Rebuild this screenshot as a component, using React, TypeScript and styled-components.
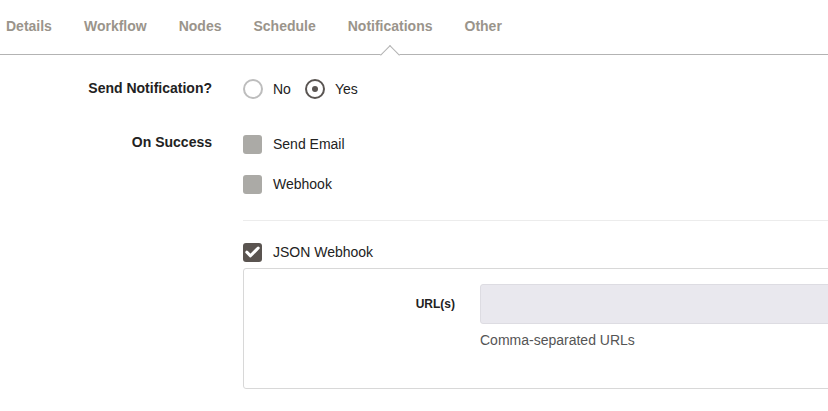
import React from "react";
import styled, { createGlobalStyle } from "styled-components";

const Global = createGlobalStyle`
  html, body { margin: 0; padding: 0; background: #fff; overflow: hidden; }
  body { font-family: "Liberation Sans", Arial, sans-serif; color: #222; }
`;

const Page = styled.div`
  width: 900px;
`;

const TabBar = styled.nav`
  display: flex;
  gap: 32px;
  padding: 18px 0 0 6px;
  box-sizing: border-box;
  border-bottom: 1px solid #b3b3b3;
  height: 55px;
`;

const Tab = styled.div<{ $active?: boolean }>`
  position: relative;
  font-size: 14px;
  font-weight: bold;
  line-height: 16px;
  color: #9a948b;
  height: 36px;
  &::after {
    content: "";
    display: ${(p) => (p.$active ? "block" : "none")};
    position: absolute;
    left: 50%;
    bottom: -8px;
    width: 14px;
    height: 14px;
    margin-left: -7px;
    background: #fff;
    border-left: 1px solid #b3b3b3;
    border-top: 1px solid #b3b3b3;
    transform: rotate(45deg);
    box-sizing: border-box;
  }
`;

const Form = styled.div`
  display: grid;
  grid-template-columns: 212px 1fr;
  column-gap: 31px;
  row-gap: 34px;
  padding-top: 23px;
`;

const Label = styled.div<{ $pt?: number }>`
  text-align: right;
  font-size: 14px;
  font-weight: bold;
  line-height: 16px;
  color: #222;
  padding-top: ${(p) => p.$pt ?? 0}px;
`;

const RadioGroup = styled.div`
  display: flex;
  align-items: center;
  gap: 14px;
  height: 22px;
`;

const RadioOption = styled.label`
  display: flex;
  align-items: center;
  gap: 10px;
  font-size: 14px;
  color: #222;
`;

const RadioCircle = styled.span<{ $checked?: boolean }>`
  width: 20px;
  height: 20px;
  box-sizing: border-box;
  border-radius: 50%;
  border: 2px solid ${(p) => (p.$checked ? "#5a5552" : "#bdbdbd")};
  display: flex;
  align-items: center;
  justify-content: center;
  &::after {
    content: "";
    display: ${(p) => (p.$checked ? "block" : "none")};
    width: 6px;
    height: 6px;
    border-radius: 50%;
    background: #5a5552;
  }
`;

const Controls = styled.div`
  display: flex;
  flex-direction: column;
`;

const CheckRow = styled.label<{ $mt?: number }>`
  display: flex;
  align-items: center;
  gap: 11px;
  height: 20px;
  margin-top: ${(p) => p.$mt ?? 0}px;
  font-size: 14px;
  color: #222;
`;

const Box = styled.span<{ $checked?: boolean }>`
  width: 19px;
  height: 19px;
  border-radius: 3px;
  background: ${(p) => (p.$checked ? "#5a5450" : "#abaaa6")};
  display: flex;
  align-items: center;
  justify-content: center;
`;

const Divider = styled.hr`
  margin: 26px 0 0;
  border: 0;
  border-top: 1px solid #ececec;
  height: 0;
`;

const Panel = styled.div`
  margin-top: 6px;
  border: 1px solid #d8d8d8;
  border-radius: 3px;
  padding: 15px 0 39px;
  display: grid;
  grid-template-columns: 211px 1fr;
  column-gap: 25px;
  row-gap: 7px;
`;

const FieldLabel = styled.div`
  text-align: right;
  font-size: 12px;
  font-weight: bold;
  color: #222;
  align-self: center;
`;

const Input = styled.input`
  height: 40px;
  box-sizing: border-box;
  border: 1px solid #dddce2;
  border-radius: 3px;
  background: #e9e8ee;
  outline: none;
`;

const Help = styled.div`
  grid-column: 2;
  font-size: 14px;
  line-height: 18px;
  color: #555;
`;

const Check = () => (
  <svg width="15" height="12" viewBox="0 0 15 12">
    <polyline points="1.8,6.2 5.5,9.8 13.2,2" fill="none" stroke="#fff" strokeWidth="3" strokeLinecap="round" strokeLinejoin="round" />
  </svg>
);

export default function App() {
  const tabs = ["Details", "Workflow", "Nodes", "Schedule", "Notifications", "Other"];
  return (
    <Page>
      <Global />
      <TabBar>
        {tabs.map((t) => (
          <Tab key={t} $active={t === "Notifications"}>{t}</Tab>
        ))}
      </TabBar>
      <Form>
        <Label $pt={2}>Send Notification?</Label>
        <RadioGroup>
          <RadioOption><RadioCircle />No</RadioOption>
          <RadioOption><RadioCircle $checked />Yes</RadioOption>
        </RadioGroup>
        <Label>On Success</Label>
        <Controls>
          <CheckRow><Box />Send Email</CheckRow>
          <CheckRow $mt={20}><Box />Webhook</CheckRow>
          <Divider />
          <CheckRow $mt={21}><Box $checked><Check /></Box>JSON Webhook</CheckRow>
          <Panel>
            <FieldLabel>URL(s)</FieldLabel>
            <Input />
            <Help>Comma-separated URLs</Help>
          </Panel>
        </Controls>
      </Form>
    </Page>
  );
}
